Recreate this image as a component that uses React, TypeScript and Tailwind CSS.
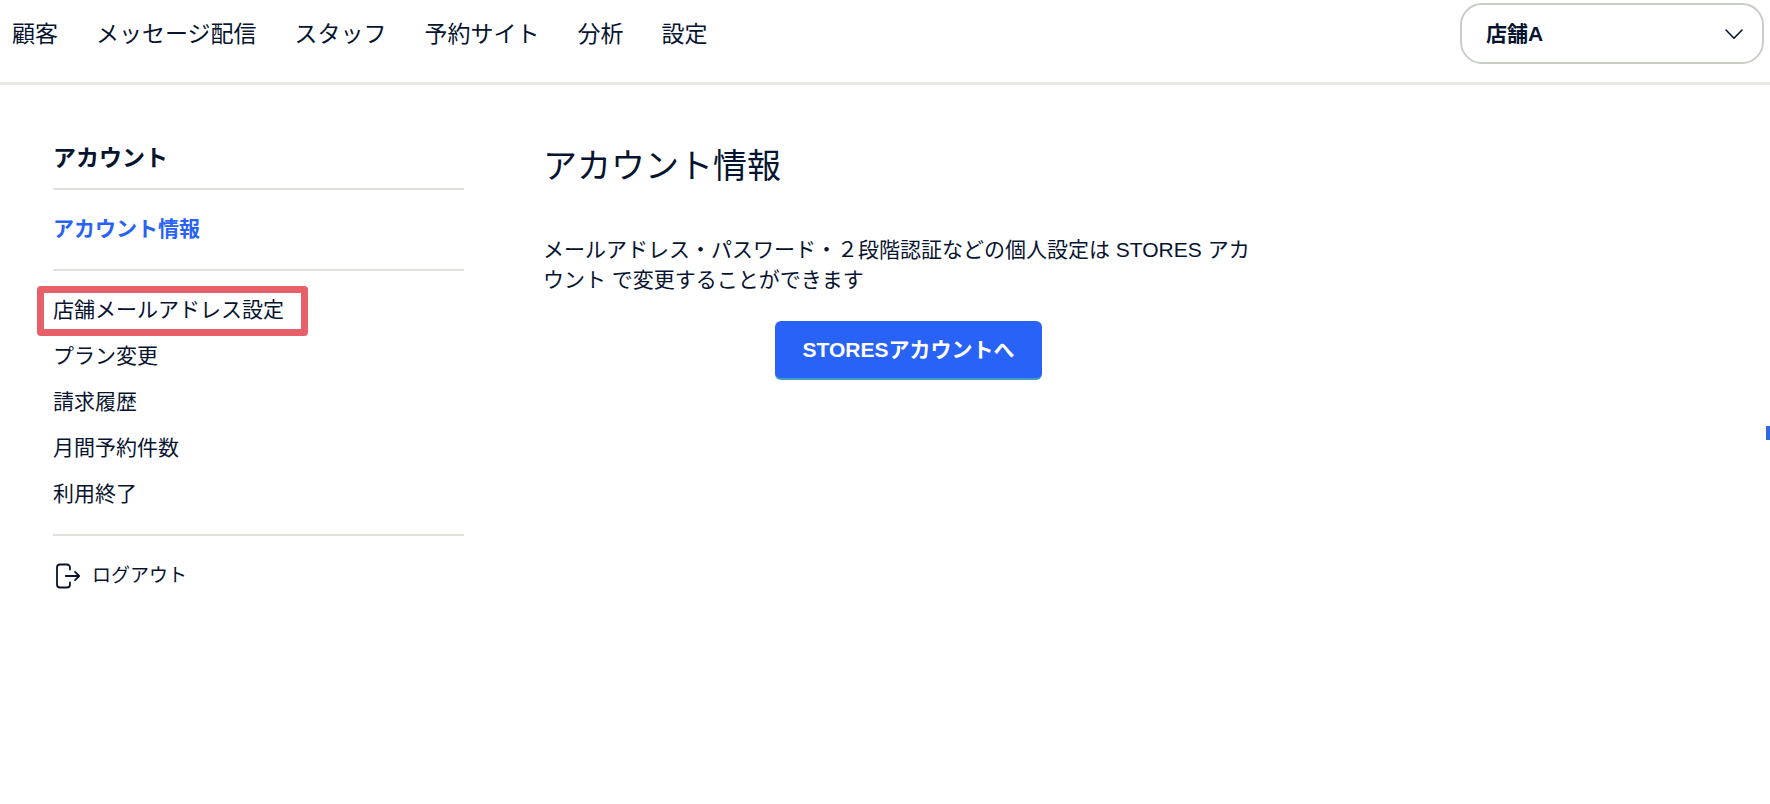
import React from "react";

const navItems = ["顧客", "メッセージ配信", "スタッフ", "予約サイト", "分析", "設定"];

const menuItems = ["店舗メールアドレス設定", "プラン変更", "請求履歴", "月間予約件数", "利用終了"];

function ChevronIcon() {
  return (
    <svg
      className="pointer-events-none absolute top-1/2 right-5 h-3 w-5 -translate-y-1/2"
      viewBox="0 0 20 12"
      fill="none"
      stroke="currentColor"
      strokeWidth="1.6"
      strokeLinecap="round"
      strokeLinejoin="round"
      aria-hidden="true"
    >
      <path d="M2 2 10 10.200 18 2" />
    </svg>
  );
}

function LogoutIcon() {
  return (
    <svg
      className="h-7 w-7 shrink-0"
      viewBox="0 0 28 28"
      fill="none"
      stroke="currentColor"
      strokeWidth="1.8"
      strokeLinecap="round"
      strokeLinejoin="round"
      aria-hidden="true"
    >
      <path d="M17 7.500V5.500a3 3 0 0 0-3-3H7a3 3 0 0 0-3 3v17a3 3 0 0 0 3 3h7a3 3 0 0 0 3-3v-2" />
      <path d="M12.800 14H26M22 9.800 26.200 14 22 18.200" />
    </svg>
  );
}

function Header() {
  return (
    <header className="flex items-center justify-between border-b-[3px] border-[#e9eae6] pt-[3px] pr-1.5 pb-[18px] pl-3">
      <nav aria-label="メイン" className="flex gap-[38px] text-[23px] leading-8 whitespace-nowrap">
        {navItems.map((item) => (
          <a key={item} href="#">
            {item}
          </a>
        ))}
      </nav>
      <div className="relative w-[304px]">
        <select
          aria-label="店舗"
          className="block h-[61px] w-full appearance-none rounded-[22px] border-2 border-[#c8cec6] bg-white pr-12 pl-6 text-[21px] font-bold"
        >
          <option>店舗A</option>
        </select>
        <ChevronIcon />
      </div>
    </header>
  );
}

function Sidebar() {
  return (
    <aside className="w-[411px] shrink-0 text-[21px]">
      <h2 className="border-b-2 border-[#dfe0db] pb-[13px] text-[23px] leading-[34px] font-bold">アカウント</h2>
      <div className="border-b-2 border-[#dfe0db] pt-4 pb-[17px] leading-[46px]">
        <a href="#" aria-current="page" className="block font-bold text-[#2962f6]">
          アカウント情報
        </a>
      </div>
      <ul className="border-b-2 border-[#dfe0db] pt-4 pb-[17px] leading-[46px]">
        {menuItems.map((item, index) => (
          <li key={item} className="flex">
            <a href="#" className="relative">
              {item}
              {index === 0 && (
                <span className="pointer-events-none absolute -top-px -right-6 -bottom-[3px] -left-4 rounded border-[7px] border-[#e65f69]" />
              )}
            </a>
          </li>
        ))}
      </ul>
      <a href="#" className="flex items-center gap-[11px] pt-[17px] text-[19px] leading-[46px]">
        <LogoutIcon />
        ログアウト
      </a>
    </aside>
  );
}

export default function App() {
  return (
    <div
      lang="ja"
      className="min-h-screen bg-white font-['Liberation_Sans','Noto_Sans_CJK_JP',sans-serif] text-[#07142f]"
    >
      <Header />
      <div className="flex gap-[79px] px-[53px] pt-14">
        <Sidebar />
        <main className="max-w-[731px] flex-1">
          <h1 className="text-[34px] leading-[50px]">アカウント情報</h1>
          <p className="mt-11 text-[21px] leading-[30px]">
            メールアドレス・パスワード・２段階認証などの個人設定は STORES アカ
            <br />
            ウント で変更することができます
          </p>
          <div className="mt-[26px] flex justify-center">
            <button
              type="button"
              className="h-[59px] rounded-md border-b-2 border-[#479bc0] bg-[#2962f6] px-7 text-[21px] font-bold text-white"
            >
              STORESアカウントへ
            </button>
          </div>
        </main>
      </div>
      <button type="button" aria-label="ヘルプ" className="fixed top-[426px] right-0 h-3.5 w-1 bg-[#2f6bdf]" />
    </div>
  );
}
